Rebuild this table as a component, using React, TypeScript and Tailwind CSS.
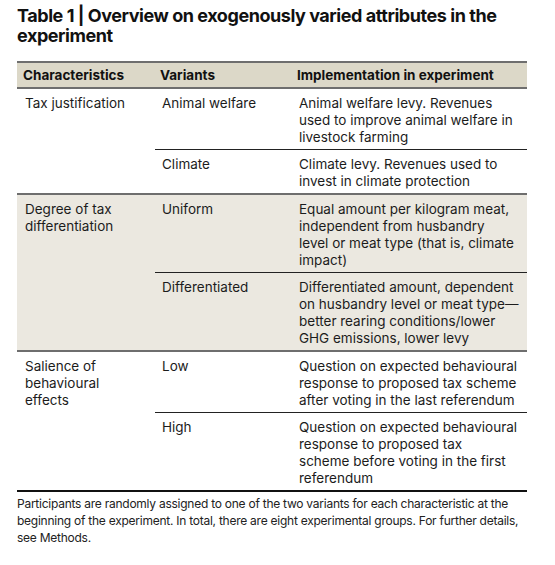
import React from "react";

const font = { fontFamily: "Inter, 'Noto Sans', sans-serif" };

type Row = { variant: string; impl: string[] };
type Group = { name: string[]; rows: Row[]; shaded: boolean };

const groups: Group[] = [
  {
    name: ["Tax justification"],
    shaded: false,
    rows: [
      {
        variant: "Animal welfare",
        impl: ["Animal welfare levy. Revenues", "used to improve animal welfare in", "livestock farming"],
      },
      { variant: "Climate", impl: ["Climate levy. Revenues used to", "invest in climate protection"] },
    ],
  },
  {
    name: ["Degree of tax", "differentiation"],
    shaded: true,
    rows: [
      {
        variant: "Uniform",
        impl: [
          "Equal amount per kilogram meat,",
          "independent from husbandry",
          "level or meat type (that is, climate",
          "impact)",
        ],
      },
      {
        variant: "Differentiated",
        impl: [
          "Differentiated amount, dependent",
          "on husbandry level or meat type\u2014",
          "better rearing conditions/lower",
          "GHG emissions, lower levy",
        ],
      },
    ],
  },
  {
    name: ["Salience of", "behavioural", "effects"],
    shaded: false,
    rows: [
      {
        variant: "Low",
        impl: [
          "Question on expected behavioural",
          "response to proposed tax scheme",
          "after voting in the last referendum",
        ],
      },
      {
        variant: "High",
        impl: [
          "Question on expected behavioural",
          "response to proposed tax",
          "scheme before voting in the first",
          "referendum",
        ],
      },
    ],
  },
];

function Lines({ lines }: { lines: string[] }) {
  return (
    <>
      {lines.map((l, i) => (
        <div key={i} className="whitespace-nowrap">
          {l}
        </div>
      ))}
    </>
  );
}

export default function App() {
  return (
    <div className="w-[555px] h-[565px] bg-white text-[#1c1c1c]" style={font}>
      <div className="pl-[17px] pr-[28px] pt-[6px]">
        <h1 className="text-[18px] leading-[20px] font-bold tracking-[-0.45px] text-[#111] whitespace-nowrap">
          Table 1 | Overview on exogenously varied attributes in the
          <br />
          experiment
        </h1>
        <div className="mt-[15px] border-t-2 border-b-2 border-[#6e6e6e] bg-[#dcd8c8] grid grid-cols-[138px_136px_1fr] text-[13.5px] leading-[17px] font-bold text-[#111]">
          <div className="pl-[6px] py-[3.5px]">Characteristics</div>
          <div className="pl-[5px] py-[3.5px]">Variants</div>
          <div className="pl-[6px] py-[3.5px]">Implementation in experiment</div>
        </div>
        {groups.map((g, gi) => (
          <div
            key={gi}
            className={`grid grid-cols-[138px_1fr] text-[13.5px] leading-[17px] ${
              gi < groups.length - 1 ? "border-b-2 border-[#6e6e6e]" : "border-b-2 border-[#111]"
            } ${g.shaded ? "bg-[#ebe8e0]" : ""}`}
          >
            <div className="pl-[8px] pt-[6px]">
              <Lines lines={g.name} />
            </div>
            <div className="flex flex-col">
              {g.rows.map((r, ri) => (
                <div
                  key={ri}
                  className={`grid grid-cols-[136px_1fr] pt-[6px] pb-[3px] ${
                    ri > 0 ? "border-t border-[#222]" : ""
                  }`}
                >
                  <div className="pl-[7px]">{r.variant}</div>
                  <div className="pl-[8px]">
                    <Lines lines={r.impl} />
                  </div>
                </div>
              ))}
            </div>
          </div>
        ))}
        <div className="mt-[3px] text-[12px] leading-[17px] tracking-[-0.25px] text-[#222]">
          <Lines
            lines={[
              "Participants are randomly assigned to one of the two variants for each characteristic at the",
              "beginning of the experiment. In total, there are eight experimental groups. For further details,",
              "see Methods.",
            ]}
          />
        </div>
      </div>
    </div>
  );
}
